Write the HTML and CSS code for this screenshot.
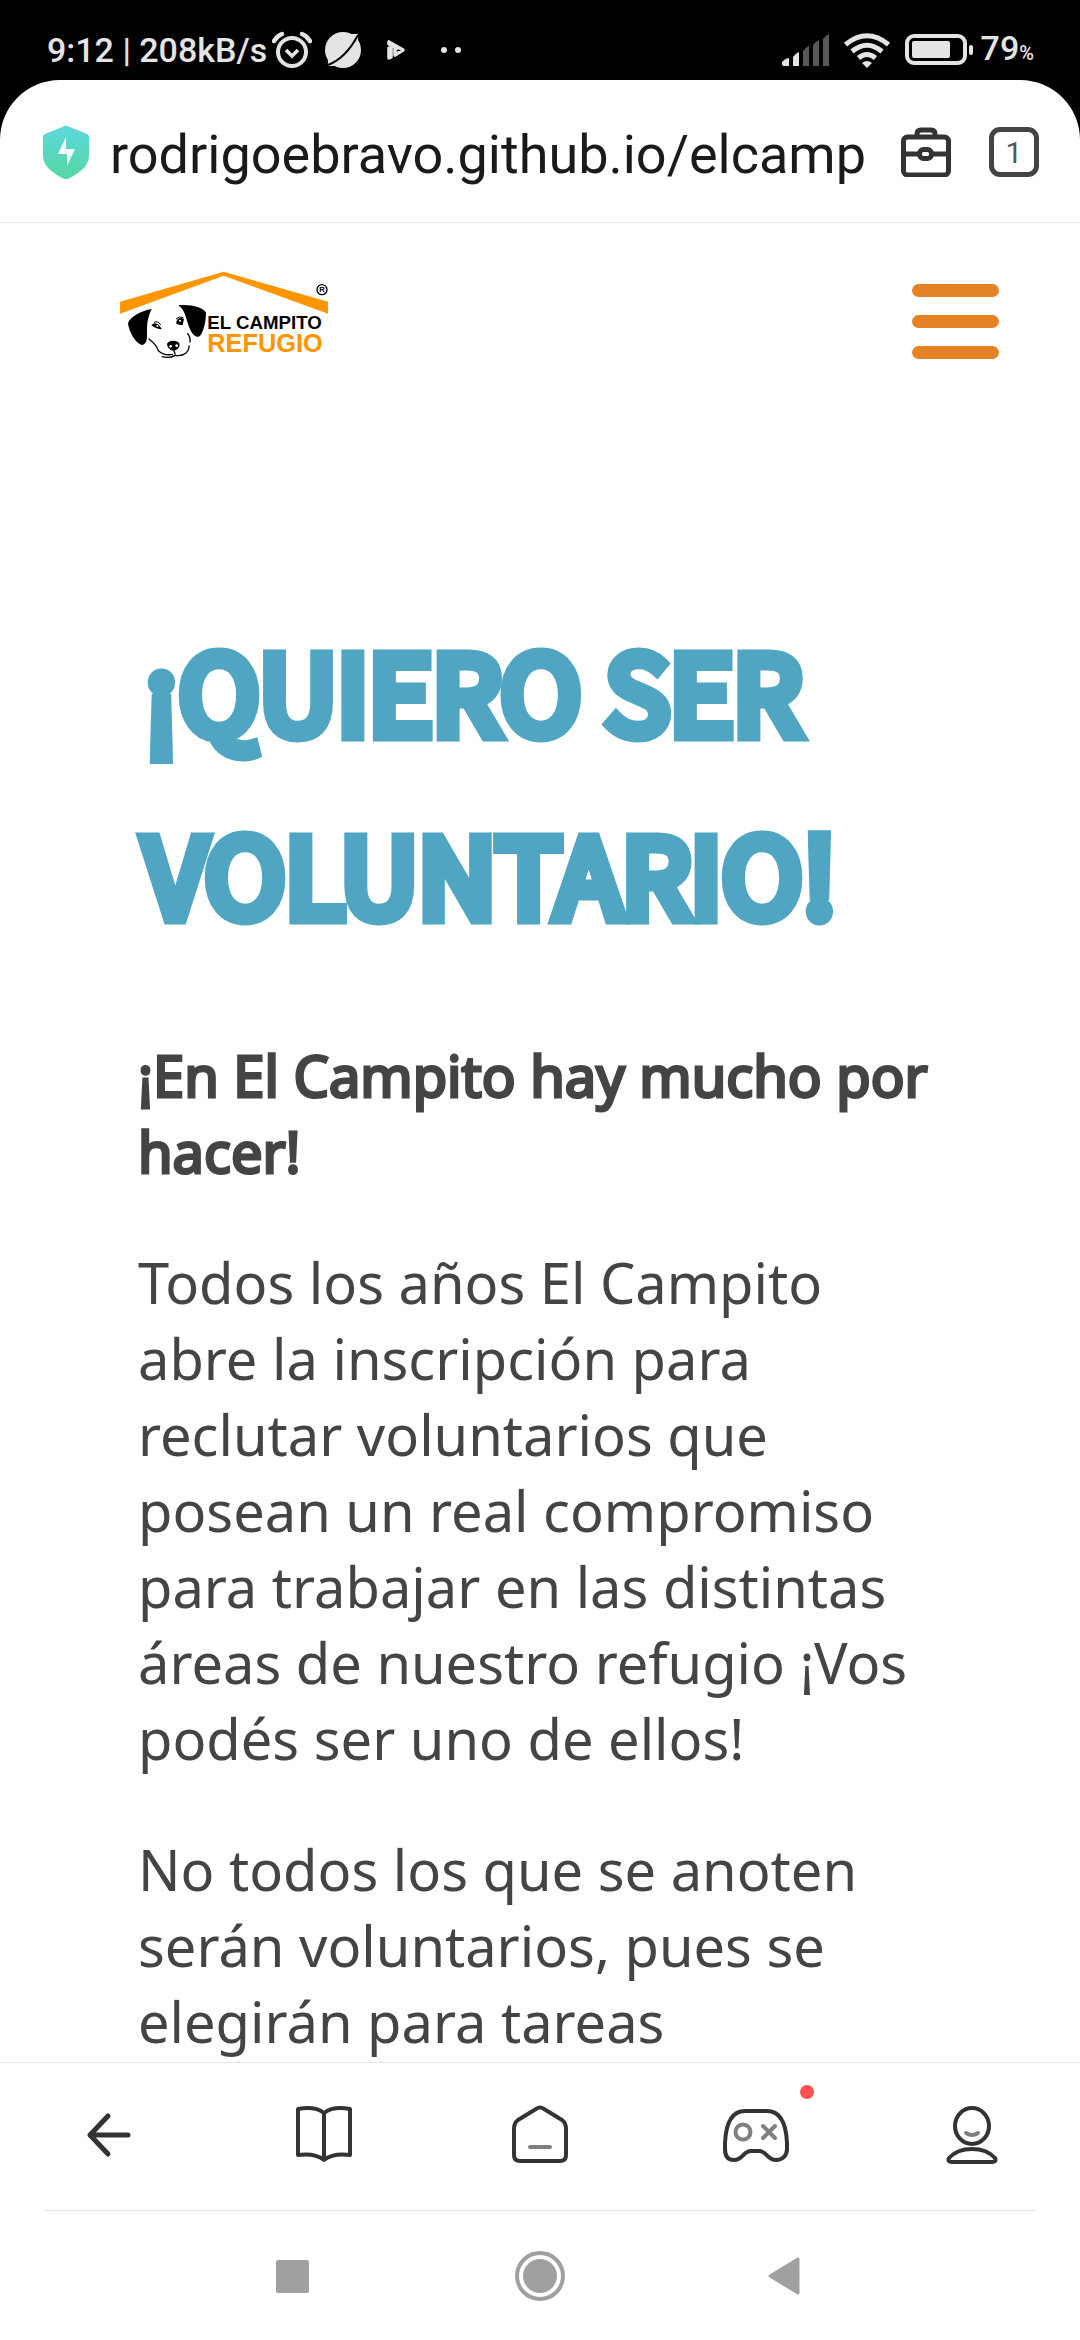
FILE: index.html
```html
<!DOCTYPE html>
<html lang="es">
<head>
<meta charset="utf-8">
<meta name="viewport" content="width=device-width, initial-scale=1">
<title>El Campito Refugio</title>
<link rel="stylesheet" href="styles.css">
</head>
<body>
<div class="phone">
  <div class="status">
    <div class="status-left">
      <span class="status-text">9:12 | 208kB/s</span>
      <svg class="alarm" width="40" height="40" viewBox="0 0 40 40" fill="none" stroke="#e4e4e4" stroke-width="4">
        <circle cx="20" cy="22" r="14"/>
        <path d="M14 20l6 6 6-6" stroke-width="3.6"/>
        <path d="M2 11q3-5 8-7M38 11q-3-5-8-7" stroke-width="4.4" stroke-linecap="round"/>
      </svg>
      <svg class="planet" width="38" height="38" viewBox="0 0 38 38">
        <circle cx="19" cy="19" r="18" fill="#e4e4e4"/>
        <path d="M24 3l10 0v8z" fill="#e4e4e4"/>
        <path d="M14 35l-10 0v-8z" fill="#e4e4e4"/>
        <path d="M4 34Q22 27 34 4" fill="none" stroke="#000" stroke-width="2"/>
      </svg>
      <svg class="play" width="20" height="22" viewBox="0 0 20 22" fill="none" stroke="#e4e4e4" stroke-width="3.6" stroke-linejoin="round" stroke-linecap="round">
        <path d="M3 9v10l2-1V9M3 3l14 8-8 5V9M3 3v2l8 4"/>
      </svg>
      <svg class="dots" width="22" height="8" viewBox="0 0 22 8" fill="#e4e4e4"><circle cx="4" cy="4" r="3"/><circle cx="18" cy="4" r="3"/></svg>
    </div>
    <div class="status-right">
      <svg width="48" height="34" viewBox="0 0 48 34">
        <path fill="#e4e4e4" d="M0 29q4-4 7-4v8H2q-2 0-2-2zM11 24q3-4 6-5v14h-6z"/>
        <path fill="#585858" d="M21 18q3-4 6-5v20h-6zM31 12q3-4 6-5v26h-6zM41 6q3-4 6-5v32h-6z"/>
      </svg>
      <svg class="wifi" width="46" height="36" viewBox="0 0 46 36" fill="none" stroke="#e4e4e4" stroke-width="5">
        <path d="M1.500 12.500Q23-5 44.500 12.500M8 19.500Q23 7 38 19.500M14.500 26Q23 19 31.500 26"/>
        <path d="M18 31q5-4 10 0l-5 5z" fill="#e4e4e4" stroke="none"/>
      </svg>
      <svg class="battery" width="68" height="32" viewBox="0 0 68 32">
        <rect x="2" y="2" width="58" height="27" rx="7" fill="none" stroke="#e4e4e4" stroke-width="4"/>
        <rect x="7" y="7" width="38" height="17" rx="2" fill="#e4e4e4"/>
        <rect x="64" y="11" width="4" height="10" rx="2" fill="#e4e4e4"/>
      </svg>
      <span class="status-text">79<span class="percent">%</span></span>
    </div>
  </div>

  <div class="browser">
    <div class="address">
      <svg width="46" height="54" viewBox="0 0 46 54">
        <defs><linearGradient id="shield" x1="0" y1="0" x2="0" y2="1"><stop offset="0" stop-color="#5cd8df"/><stop offset="1" stop-color="#56d7a0"/></linearGradient></defs>
        <path d="M20.500 1.500q2.500-1.500 5 0L44 9q2 1 2 3v18c0 12-10 18-20.500 23.500q-2.500 1-5 0C10 48 0 42 0 30V12q0-2 2-3z" fill="url(#shield)"/>
        <path d="M23 12v12h9L24 41V29h-9z" fill="#fff"/>
      </svg>
      <input class="url" type="text" aria-label="Dirección" value="rodrigoebravo.github.io/elcamp">
      <button class="tool" aria-label="Herramientas">
        <svg width="50" height="50" viewBox="0 0 50 50" fill="none" stroke="#333" stroke-width="5">
          <rect x="2.500" y="10" width="45" height="38" rx="4"/>
          <path d="M16 10V7q0-4 4-4h10q4 0 4 4v3M3 27h15M32 27h15"/>
          <rect x="18.500" y="22.500" width="12" height="9" rx="4"/>
        </svg>
      </button>
      <button class="tabs" aria-label="Pestañas">1</button>
    </div>

    <main class="site">
      <header class="site-header">
        <a href="#" class="logo" aria-label="El Campito Refugio">
          <svg width="210" height="92" viewBox="60 55 630 276">
            <path d="M60 153L371 63 684 153v36L371 75 60 189z" fill="#ff9600"/>
            <path d="M155 175C125 180 90 198 84 218c2 20 20 60 42 65 20-3 14-30 15-50 0-20 5-40 14-58z"/>
            <path d="M235 164c35-4 75 5 83 22 0 25-8 65-22 72-18 2-28-25-34-45-6-22-12-38-27-49z"/>
            <path d="M154 224q14-17 32 12-16 0-32-12zM228 218q4-22 24-14l-4 20q-12 0-20-6z"/>
            <circle cx="172" cy="226" r="3" fill="#fff"/><circle cx="240" cy="210" r="3" fill="#fff"/>
            <path d="M201 279q6-10 20-9 18 1 18 14-2 12-18 17-20-6-20-22z"/>
            <circle cx="212" cy="287" r="4" fill="#fff"/><circle cx="230" cy="285" r="4" fill="#fff"/>
            <path d="M222 300l4 12M146 264q24 18 29 36 18 16 44 11M185 318q25 6 40-4 20 4 34-8 10-12 8-22M262 248q10 10 8 28" fill="none" stroke="#000" stroke-width="4"/>
            <path d="M162 215q12-6 20 8M228 205q10-10 22-4" fill="none" stroke="#000" stroke-width="3"/>
            <text x="322" y="235" class="logo-name">EL CAMPITO</text>
            <text x="322" y="304" class="logo-kind">REFUGIO</text>
            <circle cx="666" cy="117" r="15" fill="none" stroke="#000" stroke-width="4"/>
            <text x="658" y="125" class="logo-mark">R</text>
          </svg>
        </a>
        <button class="menu" aria-label="Menú"><span class="bar"></span><span class="bar"></span><span class="bar"></span></button>
      </header>
      <article class="content">
        <h1>¡QUIERO SER VOLUNTARIO!</h1>
        <p><strong>¡En El Campito hay mucho por hacer!</strong></p>
        <p>Todos los años El Campito abre la inscripción para reclutar voluntarios que posean un real compromiso para trabajar en las distintas áreas de nuestro refugio ¡Vos podés ser uno de ellos!</p>
        <p>No todos los que se anoten serán voluntarios, pues se elegirán para tareas</p>
      </article>
    </main>

    <nav class="toolbar" aria-label="Navegador">
      <button aria-label="Atrás">
        <svg width="60" height="60" viewBox="0 0 60 60" class="line"><path d="M50 30H12M30 11L12 30l18 19" stroke-width="5"/></svg>
      </button>
      <button aria-label="Lectura">
        <svg width="60" height="60" viewBox="0 0 60 60" class="line"><path d="M30 8Q21 1 4 4v46q17-2 26 5 9-7 26-5V4Q39 1 30 8zM30 8v46"/></svg>
      </button>
      <button aria-label="Inicio">
        <svg width="60" height="60" viewBox="0 0 60 60" class="line"><path d="M26 4q4-3 8 0l18 11q4 3 4 9v26q0 6-6 6H10q-6 0-6-6V24q0-6 4-9z"/><path d="M20 42h20" stroke="#808080"/></svg>
      </button>
      <button aria-label="Juegos" class="games">
        <svg width="70" height="60" viewBox="0 0 70 60" class="line"><path d="M24 6h22c12 0 19 10 20 32v6c0 7-5 11-11 11-9 0-9-9-17-9h-8c-8 0-8 9-17 9-6 0-9-4-9-11v-6C5 16 12 6 24 6z"/><circle cx="22" cy="27" r="7.500" stroke="#808080"/><path d="M42 21l12 12M54 21L42 33" stroke="#808080"/></svg>
        <span class="badge"></span>
      </button>
      <button aria-label="Perfil">
        <svg width="60" height="60" viewBox="0 0 60 60" class="line"><ellipse cx="30" cy="21" rx="17" ry="18"/><path d="M24 28q6 4 12 0" stroke="#808080"/><path d="M10 57q-5 0-3-4 8-9 23-9t23 9q2 4-3 4z"/></svg>
      </button>
    </nav>

    <nav class="system" aria-label="Sistema">
      <button aria-label="Recientes"><svg width="50" height="52" viewBox="0 0 50 52"><rect x="9" y="10" width="33" height="33" rx="2" fill="#a0a0a0"/></svg></button>
      <button aria-label="Pantalla de inicio"><svg width="50" height="52" viewBox="0 0 50 52"><circle cx="25" cy="26" r="23" fill="none" stroke="#a0a0a0" stroke-width="4"/><circle cx="25" cy="26" r="17" fill="#a0a0a0"/></svg></button>
      <button aria-label="Volver"><svg width="50" height="52" viewBox="0 0 50 52"><path d="M7 26L35 9v34z" fill="#a0a0a0" stroke="#a0a0a0" stroke-width="3" stroke-linejoin="round"/></svg></button>
    </nav>
  </div>
</div>
</body>
</html>
```
FILE: styles.css
```css
* { box-sizing: border-box; }
body { margin: 0; background: #000; font-family: "Noto Sans", sans-serif; color: #444; }
button { margin: 0; padding: 0; border: 0; background: none; display: flex; align-items: center; justify-content: center; }
svg { display: block; flex: none; }

.phone { display: flex; flex-direction: column; height: 100vh; }

.status { display: flex; justify-content: space-between; padding: 30px 46px 0 47px; height: 80px; color: #e4e4e4; font-family: Roboto, sans-serif; }
.status-left, .status-right { display: flex; align-items: center; height: 40px; }
.status-text { font-size: 34px; line-height: 40px; font-weight: 500; }
.status-right .status-text { margin-left: 8px; }
.percent { font-size: 20px; }
.alarm { margin-left: 5px; }
.planet { margin-left: 12px; }
.play { margin-left: 24px; }
.dots { margin-left: 34px; }
.wifi { margin-left: 14px; }
.battery { margin-left: 15px; }

.browser { flex: 1; min-height: 0; display: flex; flex-direction: column; background: #fff; border-radius: 60px 60px 0 0; }

.address { display: flex; align-items: center; height: 143px; padding: 2px 41px 0 43px; border-bottom: 1px solid #e4e4e4; }
.url { flex: 1; min-width: 0; margin-left: 21px; padding: 4px 0 0; border: 0; outline: 0; background: none; font-family: Roboto, sans-serif; font-size: 54px; color: #1a1a1a; }
.tool { margin-right: 38px; }
.tabs { width: 50px; height: 50px; border: 5px solid #444; border-radius: 11px; font-family: Roboto, sans-serif; font-size: 30px; color: #555; }

.site { flex: 1; min-height: 0; overflow: hidden; }
.site-header { display: flex; align-items: flex-start; justify-content: space-between; padding: 46px 81px 0 120px; }
.menu { flex-direction: column; gap: 18px; padding-top: 15px; }
.bar { width: 87px; height: 13px; border-radius: 7px; background: #e48225; }
.logo-name { font: bold 56px "Liberation Sans", sans-serif; fill: #000; }
.logo-kind { font: bold 76px "Liberation Sans", sans-serif; fill: #ff9600; }
.logo-mark { font: bold 23px "Liberation Sans", sans-serif; fill: #000; }

.content { padding: 236px 138px 0; }
h1 { margin: 0 0 74px; padding-left: 6px; font-family: "Noto Sans CJK JP", sans-serif; font-size: 108px; line-height: 183px; font-weight: 400; color: #50a6c2; -webkit-text-stroke: 13px #50a6c2; }
p { margin: 0 0 55px; font-size: 56px; line-height: 76px; }
strong { font-weight: 400; -webkit-text-stroke: 3px #444; }

.toolbar { display: grid; grid-template-columns: repeat(5, 1fr); height: 148px; padding-bottom: 4px; border-top: 1px solid #e4e4e4; }
.line { fill: none; stroke: #333; stroke-width: 4; stroke-linecap: round; stroke-linejoin: round; }
.games { position: relative; }
.badge { position: absolute; top: 22px; right: 50px; width: 14px; height: 14px; border-radius: 50%; background: #ff5151; }
.system { display: flex; justify-content: center; gap: 198px; height: 130px; margin: 0 44px; border-top: 1px solid #e4e4e4; }
```
